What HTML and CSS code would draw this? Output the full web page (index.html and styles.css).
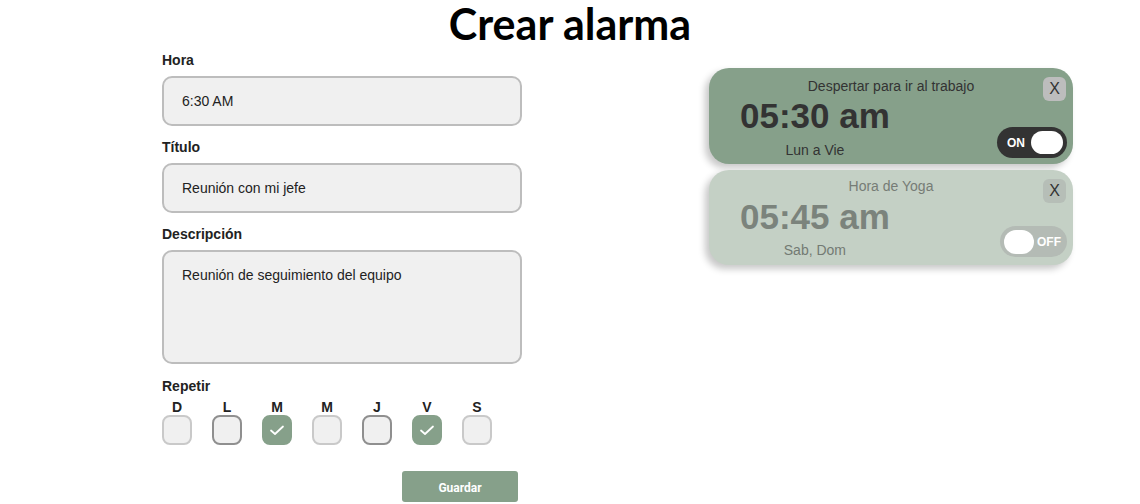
FILE: index.html
```html
<!DOCTYPE html>
<html lang="es">
<head>
<meta charset="utf-8">
<title>Crear alarma</title>
<link rel="stylesheet" href="styles.css">
</head>
<body>
<h1 class="title">Crear alarma</h1>
<div class="layout">
  <form class="form">
    <label class="label">Hora</label>
    <input class="field" type="text" value="6:30 AM">
    <label class="label label-gap">Título</label>
    <input class="field" type="text" value="Reunión con mi jefe">
    <label class="label label-gap">Descripción</label>
    <textarea class="field area">Reunión de seguimiento del equipo</textarea>
    <label class="label label-repeat">Repetir</label>
    <div class="days">
      <div class="day"><span class="day-letter">D</span><span class="box"></span></div>
      <div class="day"><span class="day-letter">L</span><span class="box box-dark"></span></div>
      <div class="day"><span class="day-letter">M</span><span class="box box-on"><svg width="16" height="12" viewBox="0 0 16 12"><path d="M2 6.5 L6 10 L14 2.5" fill="none" stroke="#fff" stroke-width="1.8" stroke-linecap="round" stroke-linejoin="round"/></svg></span></div>
      <div class="day"><span class="day-letter">M</span><span class="box"></span></div>
      <div class="day"><span class="day-letter">J</span><span class="box box-dark"></span></div>
      <div class="day"><span class="day-letter">V</span><span class="box box-on"><svg width="16" height="12" viewBox="0 0 16 12"><path d="M2 6.5 L6 10 L14 2.5" fill="none" stroke="#fff" stroke-width="1.8" stroke-linecap="round" stroke-linejoin="round"/></svg></span></div>
      <div class="day"><span class="day-letter">S</span><span class="box"></span></div>
    </div>
    <div class="actions"><button class="save" type="button">Guardar</button></div>
  </form>

  <div class="alarms">
    <div class="card">
      <div class="card-title">Despertar para ir al trabajo</div>
      <button class="close" type="button">X</button>
      <div class="card-row">
        <div class="card-main">
          <div class="card-time">05:30 am</div>
          <div class="card-days">Lun a Vie</div>
        </div>
        <div class="toggle toggle-on"><span class="toggle-text">ON</span><span class="knob"></span></div>
      </div>
    </div>
    <div class="card card-off">
      <div class="card-title">Hora de Yoga</div>
      <button class="close" type="button">X</button>
      <div class="card-row">
        <div class="card-main">
          <div class="card-time">05:45 am</div>
          <div class="card-days">Sab, Dom</div>
        </div>
        <div class="toggle toggle-off"><span class="knob"></span><span class="toggle-text">OFF</span></div>
      </div>
    </div>
  </div>
</div>
</body>
</html>
```
FILE: styles.css
```css
* { box-sizing: border-box; }
html, body { margin: 0; padding: 0; background: #fff; }
body {
  font-family: "Liberation Sans", Arial, sans-serif;
  color: #222;
  width: 1140px;
  height: 504px;
  overflow: hidden;
}
.title {
  margin: 0;
  height: 50px;
  line-height: 48px;
  text-align: center;
  font-family: Lato, "Open Sans", sans-serif;
  font-weight: 700;
  font-size: 43px;
  color: #000;
}
.layout {
  display: flex;
  align-items: flex-start;
  padding-left: 162px;
  gap: 187px;
}
.form {
  width: 360px;
  display: flex;
  flex-direction: column;
  padding-top: 2px;
}
.label {
  display: block;
  font-weight: 700;
  font-size: 14px;
  line-height: 16px;
  color: #222;
  margin-bottom: 8px;
}
.label-gap { margin-top: 13px; }
.label-repeat { margin-top: 14px; margin-bottom: 5px; }
.field {
  width: 360px;
  height: 50px;
  border: 2px solid #bdbdbd;
  border-radius: 10px;
  background: #f0f0f0;
  padding: 0 0 0 18px;
  font-family: "Liberation Sans", Arial, sans-serif;
  font-size: 14px;
  color: #222;
  outline: none;
}
.area {
  height: 114px;
  padding: 15px 18px;
  resize: none;
  line-height: 16px;
}
.days {
  display: flex;
  gap: 20px;
}
.day {
  width: 30px;
  display: flex;
  flex-direction: column;
  align-items: center;
}
.day-letter {
  font-weight: 700;
  font-size: 14px;
  line-height: 16px;
  color: #222;
}
.box {
  width: 30px;
  height: 30px;
  border: 2px solid #c9c9c9;
  border-radius: 8px;
  background: #f0f0f0;
  display: flex;
  align-items: center;
  justify-content: center;
}
.box-dark { border-color: #8f8f8f; }
.box-on { background: #86a08a; border-color: #86a08a; }
.actions {
  display: flex;
  justify-content: flex-end;
  margin-top: 26px;
  padding-right: 4px;
}
.save {
  width: 116px;
  height: 31px;
  border: none;
  border-radius: 3px;
  background: #86a08a;
  color: #fff;
  font-family: Roboto, "Liberation Sans", sans-serif;
  font-weight: 700;
  font-size: 12px;
  padding: 3px 0 0;
}
.alarms {
  width: 364px;
  margin-top: 18px;
  display: flex;
  flex-direction: column;
  gap: 6px;
}
.card {
  position: relative;
  height: 96px;
  background: #86a08a;
  border-radius: 20px;
  padding: 10px 6px 6px 31px;
  box-shadow: -4px 4px 7px rgba(0, 0, 0, 0.22);
  display: flex;
  flex-direction: column;
}
.card-off { background: #c4d0c5; height: 95px; }
.card-title {
  font-size: 14px;
  line-height: 16px;
  text-align: center;
  color: #333;
  margin-left: -25px;
}
.card-off .card-title { color: #767c76; margin-top: -2px; }
.close {
  position: absolute;
  top: 9px;
  right: 7px;
  width: 23px;
  height: 24px;
  border: none;
  border-radius: 6px;
  background: #bdbdbd;
  color: #333;
  font-family: "Liberation Sans", Arial, sans-serif;
  font-size: 16px;
  padding: 0;
}
.card-off .close { background: #b6beb7; }
.card-row {
  display: flex;
  justify-content: space-between;
  align-items: flex-end;
  margin-top: 2px;
}
.card-off .card-row { margin-top: 3px; }
.card-main {
  display: flex;
  flex-direction: column;
  align-items: center;
}
.card-time {
  font-weight: 700;
  font-size: 35px;
  line-height: 40px;
  color: #333;
}
.card-days {
  font-size: 14px;
  line-height: 16px;
  color: #333;
  margin-top: 6px;
}
.card-off .card-time { color: #7b837c; }
.card-off .card-days { color: #737a73; margin-top: 5px; }
.toggle {
  height: 31px;
  border-radius: 16px;
  display: flex;
  align-items: center;
  justify-content: space-between;
  padding: 0 4px;
}
.toggle-on { width: 70px; background: #333; padding-left: 10px; }
.toggle-off { width: 67px; background: #b4bbb5; padding-right: 6px; margin-bottom: 1px; }
.toggle-text {
  color: #fff;
  font-weight: 700;
  font-size: 12px;
}
.knob {
  background: #fff;
  border-radius: 12px;
  height: 23px;
}
.toggle-on .knob { width: 32px; }
.toggle-off .knob { width: 30px; height: 24px; }
```
